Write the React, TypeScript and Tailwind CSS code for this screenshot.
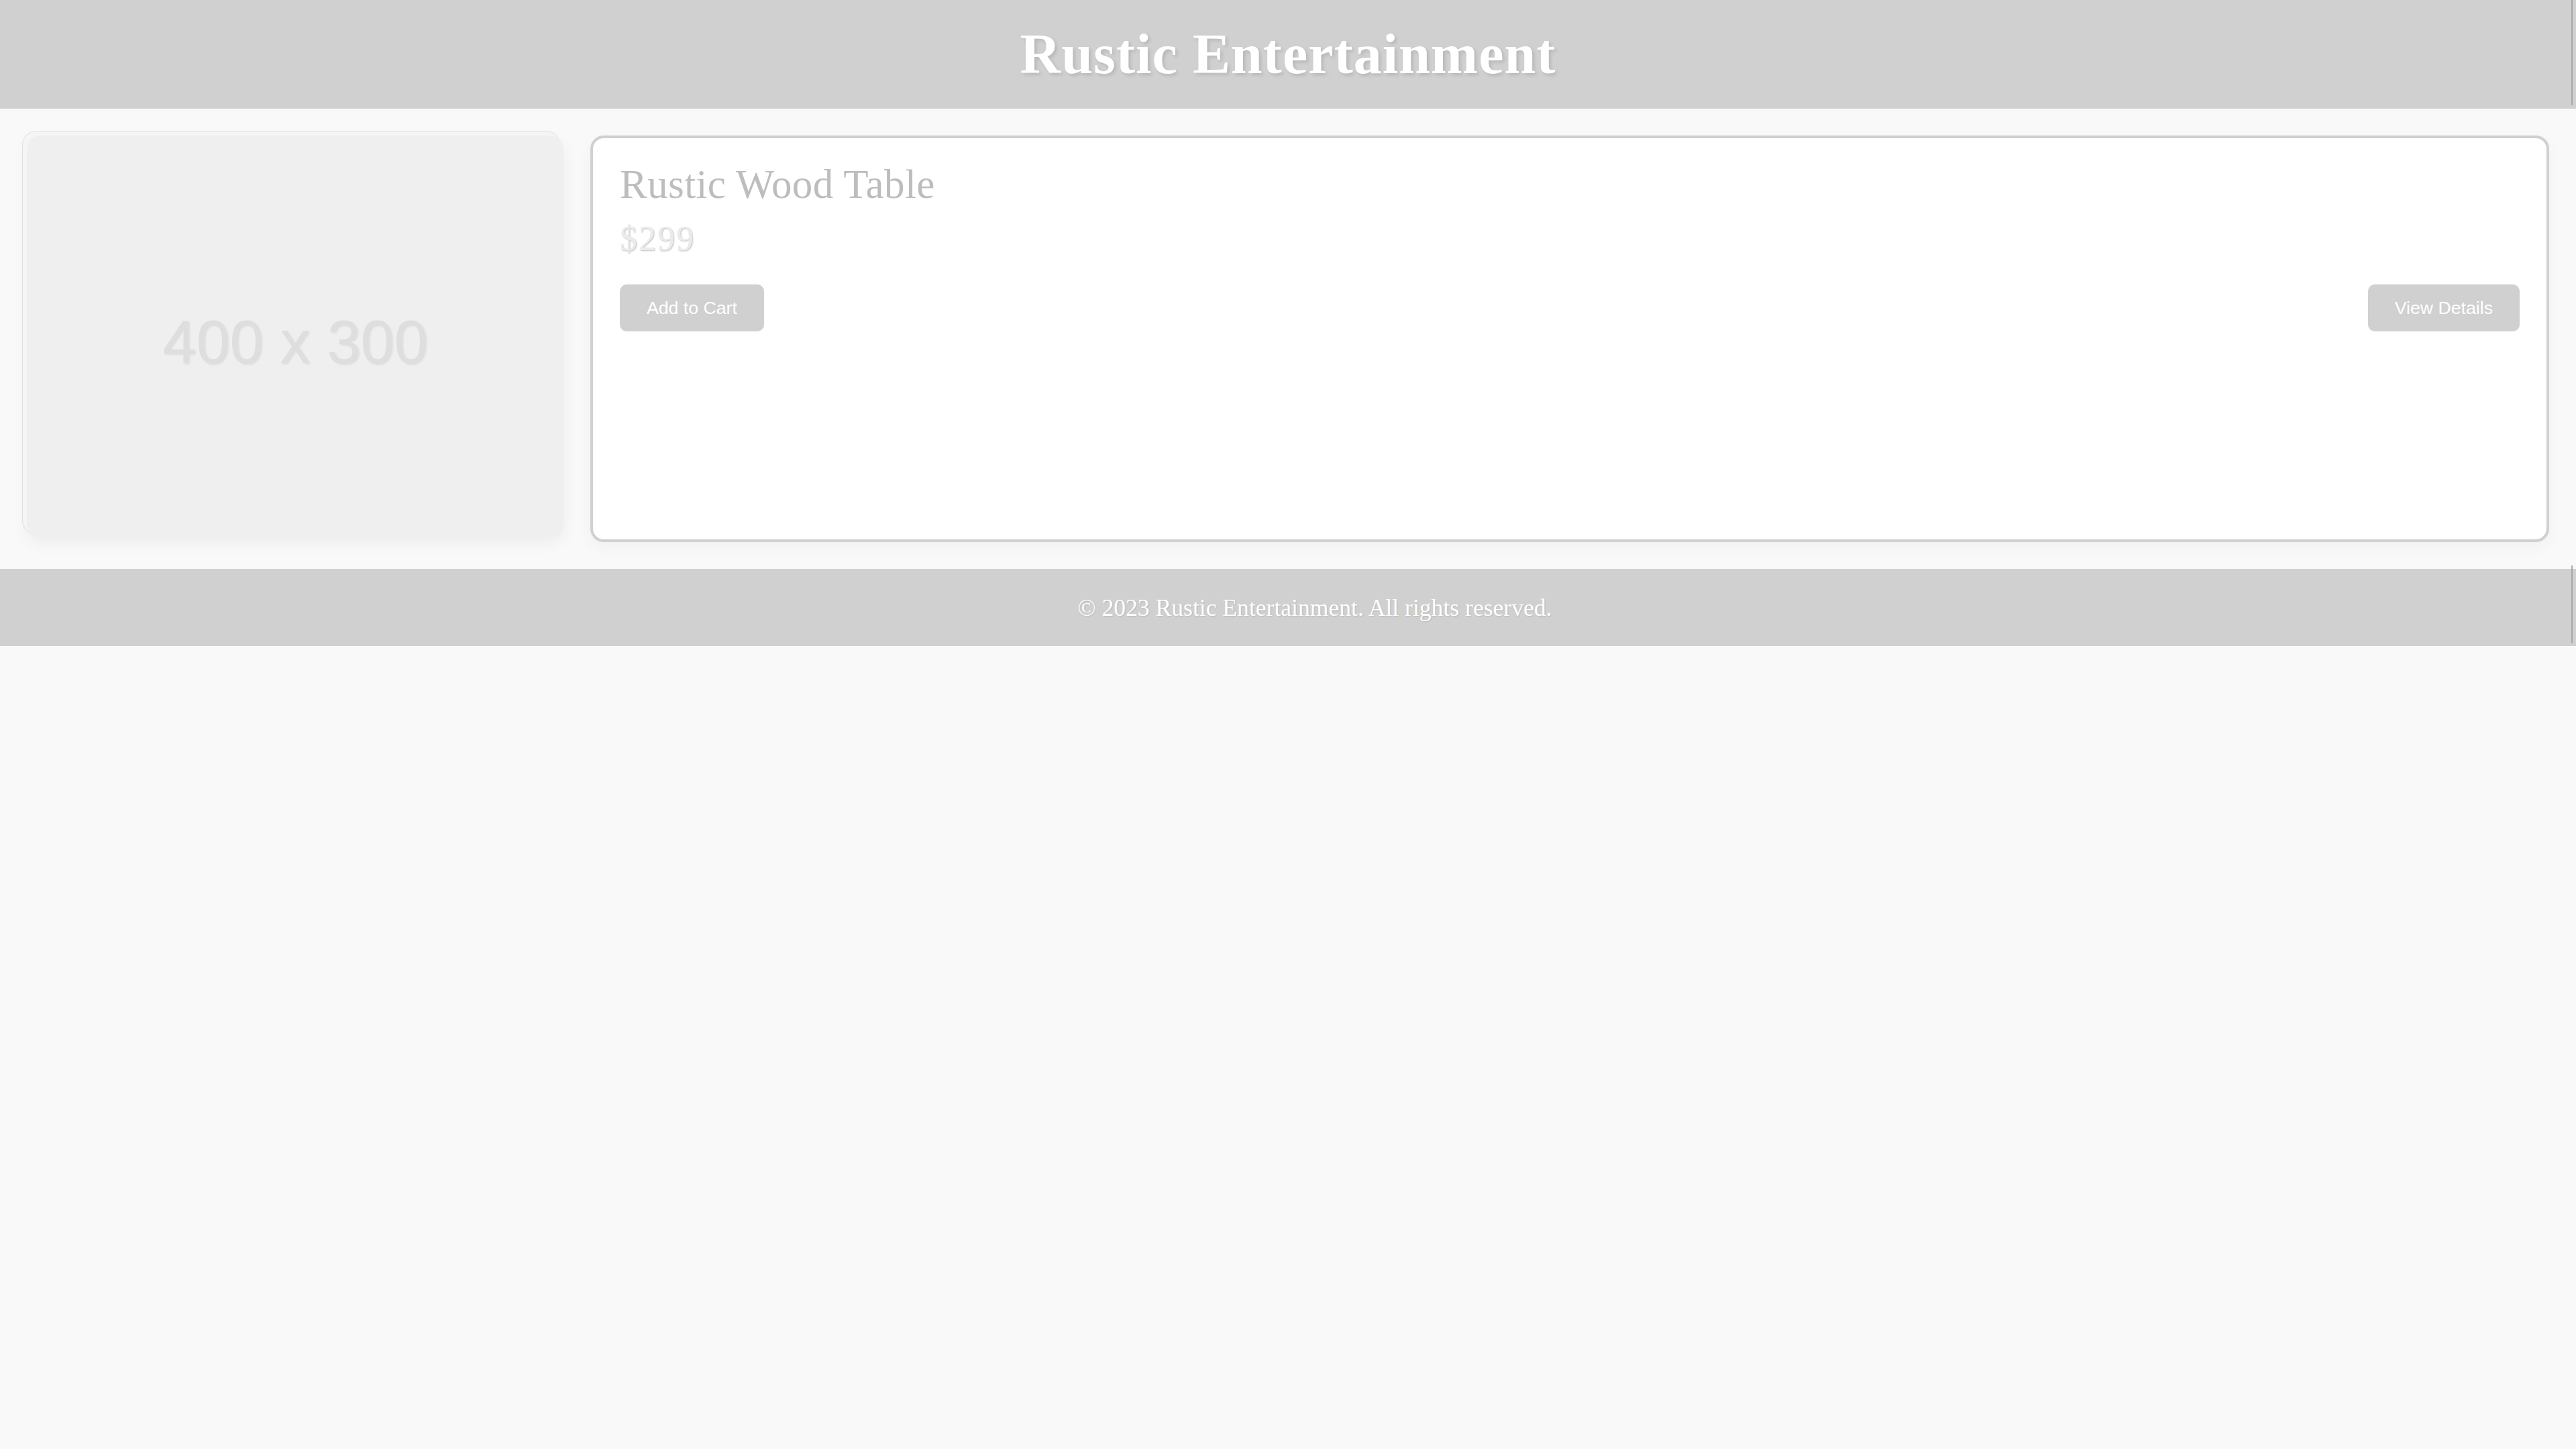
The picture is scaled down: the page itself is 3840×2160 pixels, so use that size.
import React from "react";

export default function App() {
  return (
    <div className="min-h-screen bg-[#f9f9f9] [font-family:'Liberation_Serif',serif]">
      <header className="relative h-[162px] bg-[#d0d0d0] flex items-center justify-center">
        <h1 className="text-[84px] font-bold tracking-[1.1px] text-white leading-[92px] [text-shadow:3px_3px_5px_rgba(0,0,0,0.12)]">
          Rustic Entertainment
        </h1>
        <div className="absolute left-[3833px] top-0 h-[157px] w-[2px] bg-[#a8a8a8]" />
      </header>

      <main className="flex gap-[40px] p-[40px]">
        <div className="w-[800px] h-[606px] shrink-0">
          <div className="w-[800px] h-[600px] rounded-[20px] bg-[#efefef] flex items-center justify-center shadow-[-6px_-6px_0_0_#f5f5f5,-6px_-6px_0_1px_#e0e0e0,0_8px_24px_rgba(0,0,0,0.05)]">
            <span className="mt-[16px] [font-family:'Liberation_Sans',Arial,sans-serif] text-[90px] leading-[100px] text-[#dedede] [text-shadow:2px_2px_3px_rgba(0,0,0,0.08)]">
              400 x 300
            </span>
          </div>
        </div>

        <div className="flex-1 rounded-[20px] border-4 border-[#d0d0d0] bg-white px-[40px] pt-[36px] shadow-[0_8px_24px_rgba(0,0,0,0.04)]">
          <h2 className="text-[61px] tracking-[0.4px] leading-[66px] text-[#bdbdbd]">Rustic Wood Table</h2>
          <p className="mt-[20px] text-[52px] tracking-[2px] leading-[56px] text-[#ebebeb] [text-shadow:1px_1px_2px_rgba(0,0,0,0.25)]">
            $299
          </p>
          <div className="mt-[40px] flex justify-between">
            <button className="rounded-[10px] bg-[#d0d0d0] px-[40px] py-[20px] [font-family:'Liberation_Sans',Arial,sans-serif] text-[26.67px] leading-[30px] text-white">
              Add to Cart
            </button>
            <button className="rounded-[10px] bg-[#d0d0d0] px-[40px] py-[20px] [font-family:'Liberation_Sans',Arial,sans-serif] text-[26.67px] leading-[30px] text-white">
              View Details
            </button>
          </div>
        </div>
      </main>

      <footer className="relative h-[115px] bg-[#d0d0d0] flex items-center justify-center pl-[80px]">
        <p className="text-[35.6px] leading-[40px] text-white [text-shadow:1px_1px_2px_rgba(0,0,0,0.12)]">
          © 2023 Rustic Entertainment. All rights reserved.
        </p>
        <div className="absolute left-[3833px] top-[-5px] h-[116px] w-[2px] bg-[#a8a8a8]" />
      </footer>
    </div>
  );
}
